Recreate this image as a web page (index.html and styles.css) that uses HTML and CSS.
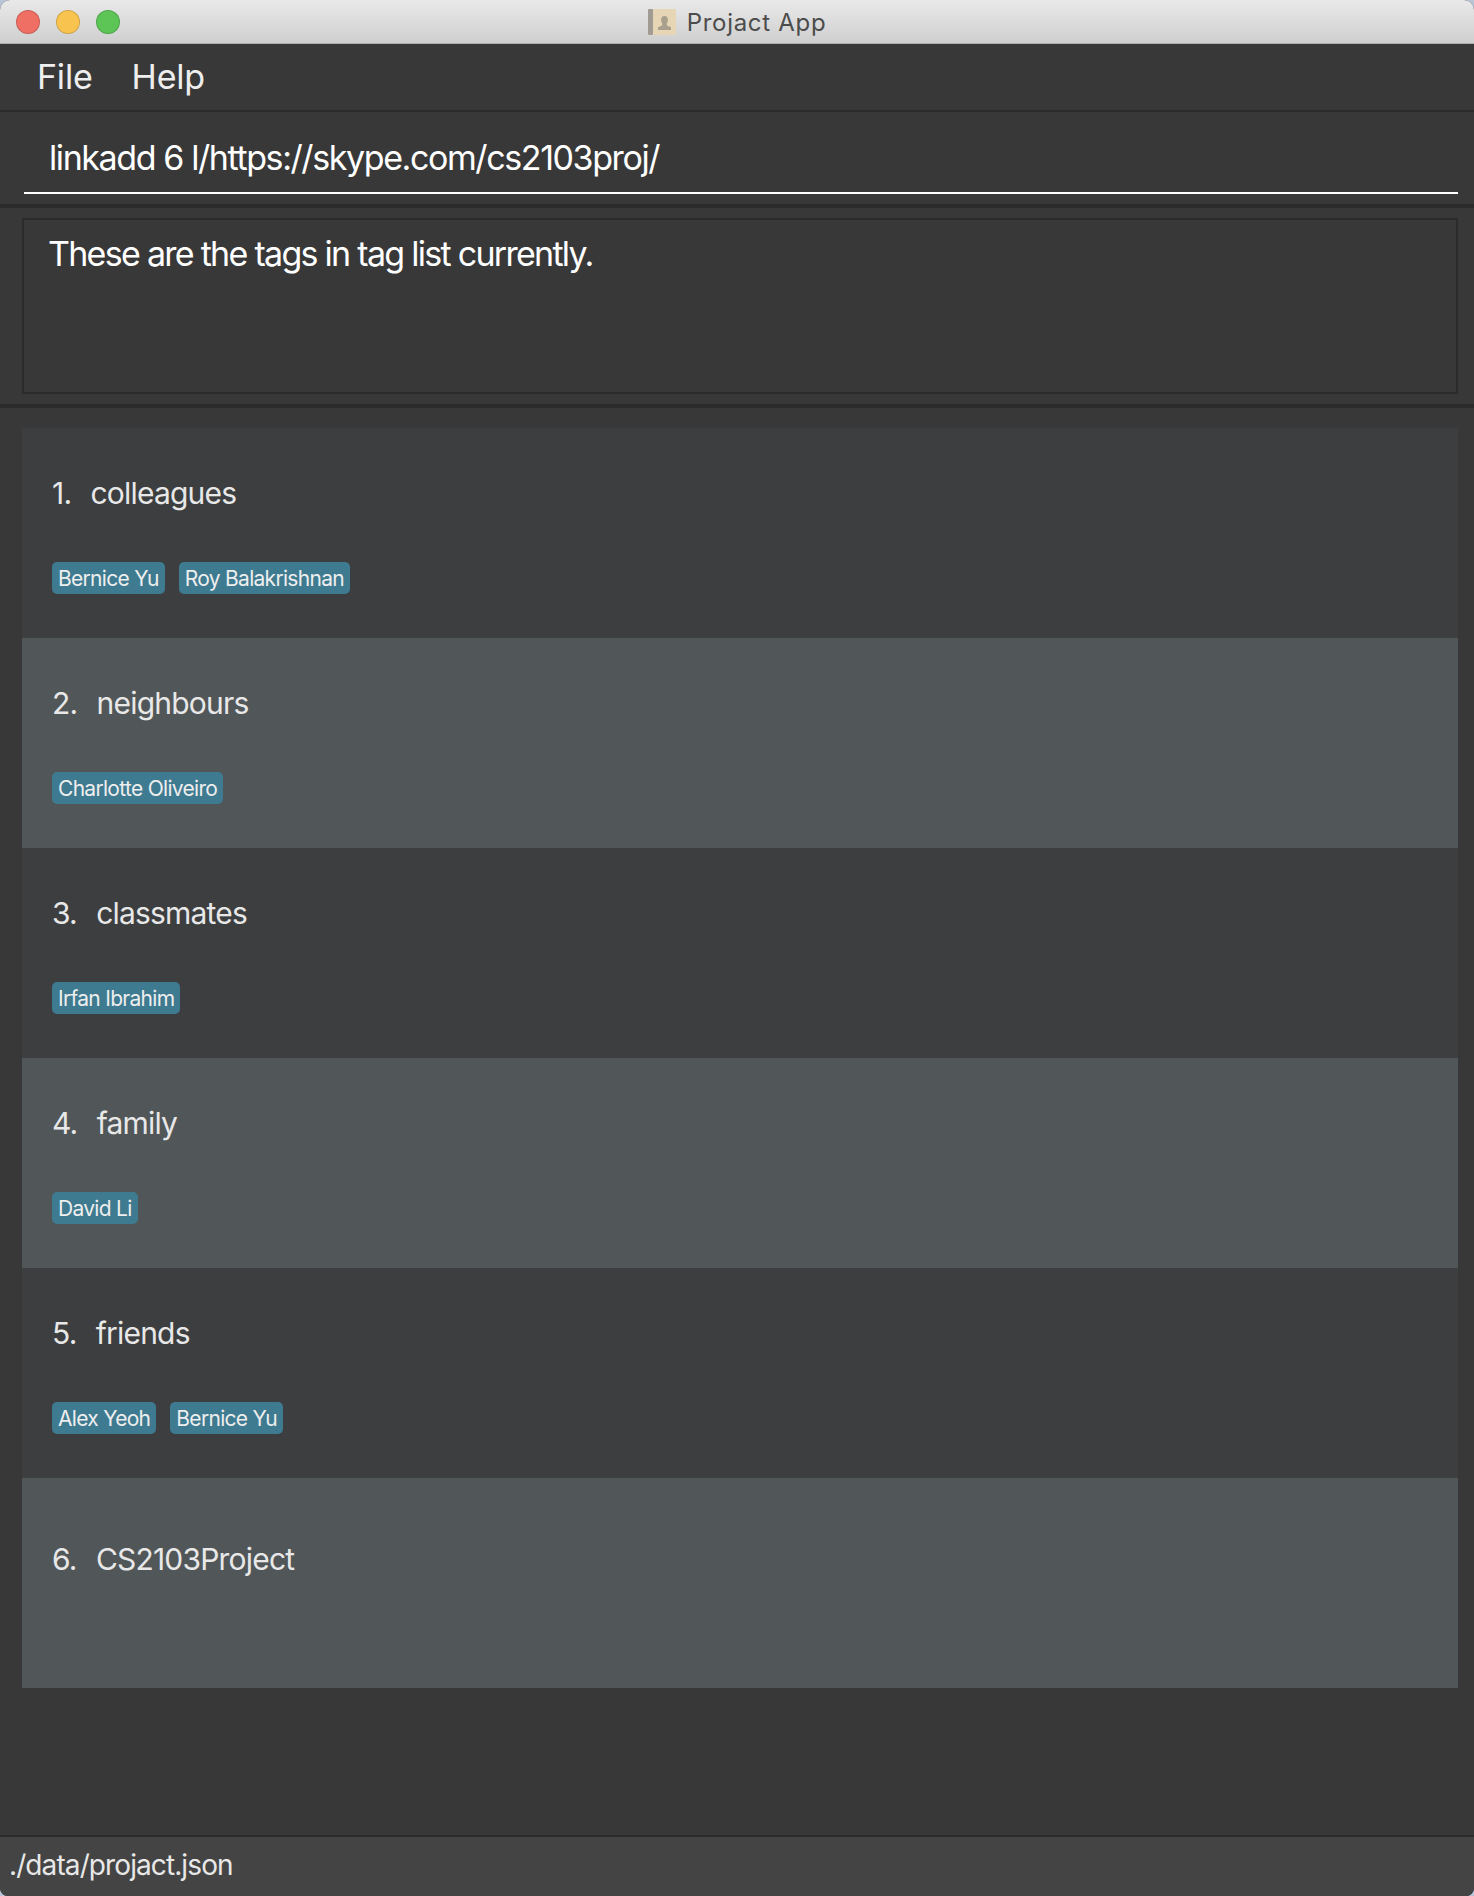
FILE: index.html
```html
<!DOCTYPE html>
<html lang="en">

<head>
    <meta charset="UTF-8">
    <title>Projact App</title>
    <link rel="stylesheet" href="styles.css">
</head>

<body>
    <div class="window">
        <header class="titlebar">
            <div class="lights">
                <span class="light light-red"></span>
                <span class="light light-yellow"></span>
                <span class="light light-green"></span>
            </div>
            <div class="title">
                <svg class="title-icon" width="28" height="26" viewBox="0 0 28 26">
                    <rect x="0" y="0" width="28" height="26" rx="1" fill="#e6d6b6" />
                    <rect x="0" y="0" width="5" height="26" rx="1" fill="#a09b93" />
                    <ellipse cx="16.500" cy="11" rx="3.400" ry="4" fill="#a8a08d" />
                    <path d="M14.500 14h4l.5 2.500 4 1.800V21H10v-2.700l4-1.800z" fill="#a8a08d" />
                </svg>
                <span>Projact App</span>
            </div>
        </header>

        <nav class="menubar">
            <span class="menu-item">File</span>
            <span class="menu-item">Help</span>
        </nav>

        <section class="command-pane">
            <div class="command-box">linkadd 6 l/https://skype.com/cs2103proj/</div>
        </section>

        <section class="result-pane">
            <div class="result-box">These are the tags in tag list currently.</div>
        </section>

        <main class="list-pane">
            <div class="tag-row">
                <div class="tag-name">1.&nbsp; colleagues</div>
                <div class="chips"><span class="chip">Bernice Yu</span><span class="chip">Roy Balakrishnan</span></div>
            </div>
            <div class="tag-row tag-row-alt">
                <div class="tag-name">2.&nbsp; neighbours</div>
                <div class="chips"><span class="chip">Charlotte Oliveiro</span></div>
            </div>
            <div class="tag-row">
                <div class="tag-name">3.&nbsp; classmates</div>
                <div class="chips"><span class="chip">Irfan Ibrahim</span></div>
            </div>
            <div class="tag-row tag-row-alt">
                <div class="tag-name">4.&nbsp; family</div>
                <div class="chips"><span class="chip">David Li</span></div>
            </div>
            <div class="tag-row">
                <div class="tag-name">5.&nbsp; friends</div>
                <div class="chips"><span class="chip">Alex Yeoh</span><span class="chip">Bernice Yu</span></div>
            </div>
            <div class="tag-row tag-row-alt tag-row-empty">
                <div class="tag-name">6.&nbsp; CS2103Project</div>
            </div>
        </main>

        <footer class="statusbar">./data/projact.json</footer>
    </div>
</body>

</html>
```

FILE: styles.css
```css
html,
body {
    margin: 0;
    padding: 0;
    background: #b9c4d6;
}

body {
    font-family: "Inter", "Liberation Sans", sans-serif;
    color: #fff;
}

.window {
    display: flex;
    flex-direction: column;
    height: 1896px;
    overflow: hidden;
    background: #383838;
    border-radius: 10px 10px 8px 8px;
}

.titlebar {
    position: relative;
    display: flex;
    align-items: center;
    justify-content: center;
    box-sizing: border-box;
    height: 44px;
    flex: none;
    background: linear-gradient(#e9e9e9, #cfcfcf);
    border-bottom: 1px solid #aeaeae;
}

.lights {
    position: absolute;
    left: 16px;
    top: 10px;
    display: flex;
    gap: 16px;
}

.light {
    width: 24px;
    height: 24px;
    box-sizing: border-box;
    border-radius: 50%;
    border: 1px solid rgba(0, 0, 0, 0.16);
}

.light-red {
    background: #ef6f65;
}

.light-yellow {
    background: #f9c350;
}

.light-green {
    background: #5cc556;
}

.title {
    display: flex;
    align-items: center;
    gap: 11px;
    padding-top: 1px;
    font-size: 24px;
    letter-spacing: 0.7px;
    color: #4c4c4c;
}

.menubar {
    display: flex;
    align-items: center;
    gap: 39px;
    box-sizing: border-box;
    height: 68px;
    flex: none;
    padding: 0 0 2px 37px;
    border-bottom: 2px solid #2b2b2b;
    font-size: 34px;
    letter-spacing: -0.2px;
    color: #eeeeee;
}

.command-pane {
    box-sizing: border-box;
    height: 96px;
    flex: none;
    padding: 0 16px 10px 24px;
    border-bottom: 4px solid #2b2b2b;
    display: flex;
}

.command-box {
    flex: 1;
    box-sizing: border-box;
    height: 82px;
    padding: 25px 0 0 25px;
    border-bottom: 2px solid #fff;
    font-size: 34px;
    letter-spacing: -1.4px;
}

.result-pane {
    box-sizing: border-box;
    height: 200px;
    flex: none;
    padding: 10px 16px 10px 22px;
    border-bottom: 4px solid #2b2b2b;
    display: flex;
}

.result-box {
    flex: 1;
    box-sizing: border-box;
    padding: 13px 0 0 24px;
    border: 2px solid #2b2b2b;
    font-size: 34px;
    letter-spacing: -1.72px;
}

.list-pane {
    flex: 1;
    padding: 20px 16px 0 22px;
    border-left: 2px solid #2b2b2b;
    margin-left: -2px;
}

.tag-row {
    box-sizing: border-box;
    height: 210px;
    padding: 45px 0 0 30px;
    background: #3c3e3f;
}

.tag-row-alt {
    background: #515658;
}

.tag-row-empty {
    padding-top: 61px;
}

.tag-name {
    height: 40px;
    line-height: 40px;
    font-size: 30px;
    letter-spacing: -0.8px;
    word-spacing: 2px;
    color: #e8e8e8;
}

.chips {
    display: flex;
    gap: 14px;
    margin-top: 49px;
}

.chip {
    box-sizing: border-box;
    height: 32px;
    line-height: 33px;
    padding: 0 6px;
    background: #3e7a90;
    border-radius: 5px;
    font-size: 21px;
    letter-spacing: -0.7px;
    color: #eeeeee;
}

.statusbar {
    box-sizing: border-box;
    height: 61px;
    flex: none;
    padding: 11px 0 0 9px;
    background: #444444;
    border-top: 2px solid #2b2b2b;
    font-size: 28px;
    letter-spacing: -0.9px;
    color: #e8e8e8;
}
```
